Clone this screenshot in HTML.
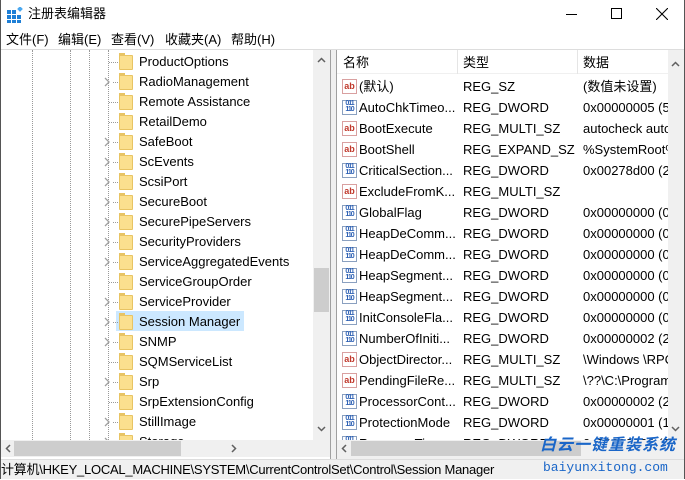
<!DOCTYPE html>
<html><head><meta charset="utf-8"><style>
*{margin:0;padding:0;box-sizing:border-box}
body{width:685px;height:479px;overflow:hidden;background:#fff;font-family:"Liberation Sans","Noto Sans CJK SC",sans-serif;font-size:13px;color:#000;position:relative}
.abs{position:absolute}
.t{position:absolute;white-space:nowrap;line-height:20px}
.fold{position:absolute;width:14px;height:15px;background:#fbe08e;border:1px solid #e8c463;border-radius:1px}
.fold:before{content:"";position:absolute;left:-1px;top:-3px;width:6px;height:3px;background:#e8c463}
.arr{position:absolute}
.hd{position:absolute;border-top:1px dotted #999;width:9px}
.ico{position:absolute;width:15px;height:15px;border:1px solid #8aa0c0;background:#fff;font-size:9px;font-weight:bold;line-height:13px;text-align:center}
.ab{color:#c0382b;border-color:#d9a0a0}
.dw{color:#2b5fb3;font-size:7px;line-height:6px;letter-spacing:-1px}
</style></head><body>
<div class="abs" style="left:0;top:0;width:1px;height:479px;background:#555"></div>
<div class="abs" style="right:0;top:0;width:1px;height:479px;background:#555"></div>
<svg class="abs" style="left:7px;top:7px" width="16" height="16"><rect x="0" y="3" width="4" height="4" fill="#1e7fd6"/><rect x="5" y="3" width="4" height="4" fill="#1e7fd6"/><rect x="0" y="8" width="4" height="4" fill="#1e7fd6"/><rect x="5" y="8" width="4" height="4" fill="#1e7fd6"/><rect x="10" y="8" width="4" height="4" fill="#1e7fd6"/><rect x="0" y="13" width="4" height="3" fill="#1e7fd6"/><rect x="5" y="13" width="4" height="3" fill="#1e7fd6"/><rect x="10" y="13" width="4" height="3" fill="#1e7fd6"/><rect x="11" y="0" width="4" height="4" fill="#4aa8f0" transform="rotate(45 13 2)"/></svg>
<div class="t" style="left:28px;top:4px;font-size:13px">注册表编辑器</div>
<div class="abs" style="left:566px;top:14px;width:11px;height:1px;background:#000"></div>
<div class="abs" style="left:611px;top:8px;width:11px;height:11px;border:1px solid #000"></div>
<svg class="abs" style="left:656px;top:8px" width="12" height="12"><path d="M0 0L12 12M12 0L0 12" stroke="#000" stroke-width="1.1"/></svg>
<div class="t" style="left:6px;top:30px">文件(F)</div>
<div class="t" style="left:58px;top:30px">编辑(E)</div>
<div class="t" style="left:111px;top:30px">查看(V)</div>
<div class="t" style="left:165px;top:30px">收藏夹(A)</div>
<div class="t" style="left:231px;top:30px">帮助(H)</div>
<div class="abs" style="left:1px;top:49px;width:683px;height:1px;background:#ddd"></div>
<div class="abs" style="left:1px;top:50px;width:329px;height:409px;overflow:hidden">
<div class="abs" style="left:31px;top:0;height:400px;border-left:1px dotted #999"></div>
<div class="abs" style="left:69px;top:0;height:400px;border-left:1px dotted #999"></div>
<div class="abs" style="left:88px;top:0;height:400px;border-left:1px dotted #999"></div>
<div class="abs" style="left:107px;top:0;height:390px;border-left:1px dotted #999"></div>
<div class="abs" style="left:115px;top:261px;width:128px;height:20px;background:#cce8ff"></div>
<div id="tree"></div>
<div class="abs" style="left:312px;top:0;width:17px;height:390px;background:#f0f0f0"></div>
<div class="abs" style="top:218px;width:15px;height:44px;left:313px;background:#cdcdcd"></div>
<svg class="abs" style="left:316px;top:7px" width="9" height="6"><path d="M1 5L4.5 1.5L8 5" stroke="#606060" stroke-width="1.5" fill="none"/></svg>
<svg class="abs" style="left:316px;top:376px" width="9" height="6"><path d="M1 1L4.5 4.5L8 1" stroke="#606060" stroke-width="1.5" fill="none"/></svg>
<div class="abs" style="left:0;top:390px;width:312px;height:17px;background:#f0f0f0"></div>
<div class="abs" style="left:13px;top:391px;width:167px;height:15px;background:#cdcdcd"></div>
<svg class="abs" style="left:4px;top:394px" width="6" height="9"><path d="M5 1L1.5 4.5L5 8" stroke="#606060" stroke-width="1.5" fill="none"/></svg>
<svg class="abs" style="left:230px;top:394px" width="6" height="9"><path d="M1 1L4.5 4.5L1 8" stroke="#606060" stroke-width="1.5" fill="none"/></svg>
<div class="abs" style="left:240px;top:390px;width:90px;height:17px;background:#f0f0f0"></div>
</div>
<div class="abs" style="left:330px;top:50px;width:1px;height:409px;background:#a0a0a0"></div>
<div class="abs" style="left:331px;top:50px;width:5px;height:409px;background:#f0f0f0"></div>
<div class="abs" style="left:336px;top:50px;width:1px;height:409px;background:#a0a0a0"></div>
<div class="abs" style="left:337px;top:50px;width:347px;height:409px;overflow:hidden">
<div class="abs" style="left:0;top:0;width:347px;height:24px;background:#fff;border-bottom:1px solid #f0f0f0"></div>
<div class="t" style="left:6px;top:3px">名称</div>
<div class="t" style="left:126px;top:3px">类型</div>
<div class="t" style="left:246px;top:3px">数据</div>
<div class="abs" style="left:120px;top:0;width:1px;height:24px;background:#e5e5e5"></div>
<div class="abs" style="left:240px;top:0;width:1px;height:24px;background:#e5e5e5"></div>
<div id="vals"></div>
<div class="abs" style="left:331px;top:0;width:16px;height:390px;background:#f0f0f0"></div>
<svg class="abs" style="left:334px;top:11px" width="9" height="6"><path d="M1 5L4.5 1.5L8 5" stroke="#606060" stroke-width="1.5" fill="none"/></svg>
<svg class="abs" style="left:334px;top:376px" width="9" height="6"><path d="M1 1L4.5 4.5L8 1" stroke="#606060" stroke-width="1.5" fill="none"/></svg>
<div class="abs" style="left:0;top:390px;width:347px;height:19px;background:#f0f0f0"></div>
<div class="abs" style="left:14px;top:391px;width:230px;height:15px;background:#cdcdcd"></div>
<svg class="abs" style="left:4px;top:394px" width="6" height="9"><path d="M5 1L1.5 4.5L5 8" stroke="#606060" stroke-width="1.5" fill="none"/></svg>
</div>
<div class="abs" style="left:1px;top:459px;width:683px;height:20px;background:#f0f0f0;border-top:1px solid #ddd"></div>
<div class="t" style="left:1px;top:460px;font-size:13px;letter-spacing:-0.25px">计算机\HKEY_LOCAL_MACHINE\SYSTEM\CurrentControlSet\Control\Session Manager</div>
<div class="t" style="left:540px;top:436px;font-size:16px;font-weight:bold;color:#1a66c8;font-style:italic;letter-spacing:1px">白云一键重装系统</div>
<div class="t" style="left:543px;top:458px;font-size:13px;color:#1a66c8;font-family:'Liberation Mono',monospace">baiyunxitong.com</div>
<script>
var n=["ProductOptions","RadioManagement","Remote Assistance","RetailDemo","SafeBoot","ScEvents","ScsiPort","SecureBoot","SecurePipeServers","SecurityProviders","ServiceAggregatedEvents","ServiceGroupOrder","ServiceProvider","Session Manager","SNMP","SQMServiceList","Srp","SrpExtensionConfig","StillImage","Storage"];
var ex=[0,1,0,0,1,1,1,1,1,1,1,0,1,1,1,0,1,0,1,1],h="";
n.forEach(function(s,i){var y=1+20*i;
if(ex[i])h+='<svg class="arr" style="left:103px;top:'+(y+6)+'px" width="6" height="10"><path d="M1 1L5 5L1 9" stroke="#a0a0a0" stroke-width="1.3" fill="none"/></svg>';
h+='<div class="hd" style="left:'+(ex[i]?112:108)+'px;top:'+(y+11)+'px;width:'+(ex[i]?5:9)+'px"></div>';
h+='<div class="fold" style="left:118px;top:'+(y+4)+'px"></div><div class="t" style="left:138px;top:'+(y+1)+'px">'+s+'</div>';});
document.getElementById('tree').innerHTML=h;
var v=[["a","(默认)","REG_SZ","(数值未设置)"],["d","AutoChkTimeo...","REG_DWORD","0x00000005 (5)"],["a","BootExecute","REG_MULTI_SZ","autocheck autochk"],["a","BootShell","REG_EXPAND_SZ","%SystemRoot%"],["d","CriticalSection...","REG_DWORD","0x00278d00 (2"],["a","ExcludeFromK...","REG_MULTI_SZ",""],["d","GlobalFlag","REG_DWORD","0x00000000 (0)"],["d","HeapDeComm...","REG_DWORD","0x00000000 (0)"],["d","HeapDeComm...","REG_DWORD","0x00000000 (0)"],["d","HeapSegment...","REG_DWORD","0x00000000 (0)"],["d","HeapSegment...","REG_DWORD","0x00000000 (0)"],["d","InitConsoleFla...","REG_DWORD","0x00000000 (0)"],["d","NumberOfIniti...","REG_DWORD","0x00000002 (2)"],["a","ObjectDirector...","REG_MULTI_SZ","\\Windows \\RPC"],["a","PendingFileRe...","REG_MULTI_SZ","\\??\\C:\\Program"],["d","ProcessorCont...","REG_DWORD","0x00000002 (2)"],["d","ProtectionMode","REG_DWORD","0x00000001 (1)"],["d","ResourceTime...","REG_DWORD","0x00000000 (0)"]];
h="";v.forEach(function(r,i){var y=27+21*i;
h+=r[0]=="a"?'<div class="ico ab" style="left:5px;top:'+(y+2)+'px">ab</div>':'<div class="ico dw" style="left:5px;top:'+(y+2)+'px">011<br>110</div>';
h+='<div class="t" style="left:22px;top:'+y+'px">'+r[1]+'</div><div class="t" style="left:126px;top:'+y+'px">'+r[2]+'</div><div class="t" style="left:246px;top:'+y+'px">'+r[3]+'</div>';});
document.getElementById('vals').innerHTML=h;
</script>
</body></html>
